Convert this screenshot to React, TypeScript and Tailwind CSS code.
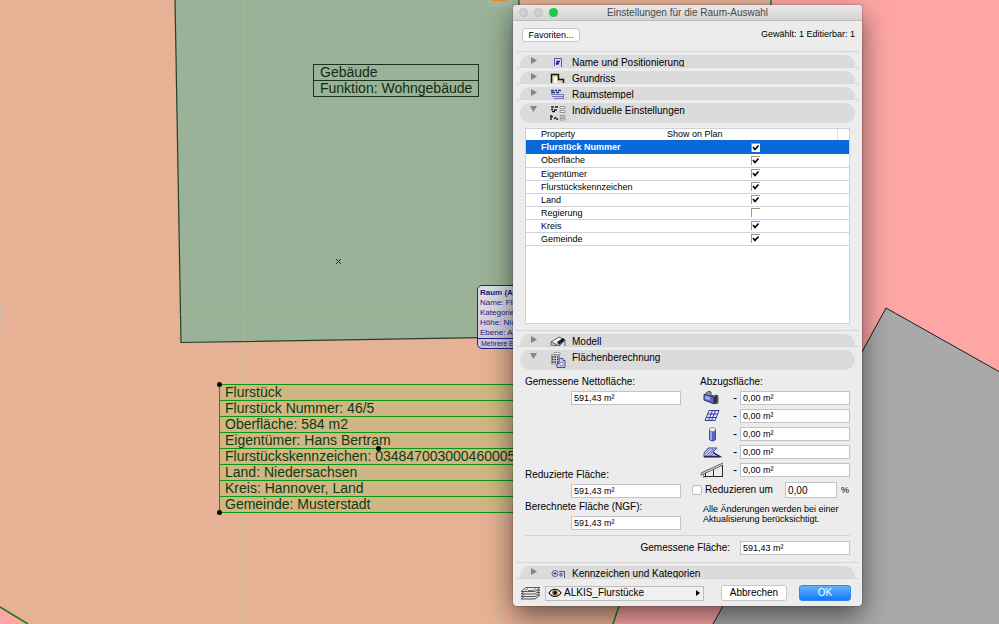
import type { ReactNode } from 'react'
import { clsx } from 'clsx'

const properties = [
  { name: 'Flurstück Nummer', shown: true, selected: true },
  { name: 'Oberfläche', shown: true },
  { name: 'Eigentümer', shown: true },
  { name: 'Flurstückskennzeichen', shown: true },
  { name: 'Land', shown: true },
  { name: 'Regierung', shown: false },
  { name: 'Kreis', shown: true },
  { name: 'Gemeinde', shown: true },
]

const parcelLines = [
  'Flurstück',
  'Flurstück Nummer: 46/5',
  'Oberfläche: 584 m2',
  'Eigentümer: Hans Bertram',
  'Flurstückskennzeichen: 034847003000460005',
  'Land: Niedersachsen',
  'Kreis: Hannover, Land',
  'Gemeinde: Musterstadt',
]

/* ---------- icons ---------- */

function PositionIcon() {
  return (
    <svg width="10" height="10" viewBox="0 0 10 10">
      <path d="M1.5 9V1.5h7V10" fill="#d5d8ee" stroke="#5a5eaa" />
      <path d="M4 8V4.5h3M3 6.5h3" fill="none" stroke="#1b1f86" strokeWidth="1.3" />
    </svg>
  )
}

function FloorPlanIcon() {
  return (
    <svg width="16" height="11" viewBox="0 0 16 11">
      <path d="M3 10V3h4v5h5v2" fill="none" stroke="#e2da7c" strokeWidth="1.4" />
      <path d="M4 10V4h3v6z" fill="#fff" />
      <path d="M1.500 10V1.500h7v5h5V10" fill="none" stroke="#16160c" strokeWidth="1.5" />
    </svg>
  )
}

function StampIcon() {
  return (
    <svg width="15" height="10" viewBox="0 0 15 10">
      <path d="M1 1.500h3M5 1.500h2M8 1.500h3M1 3.500h4M6 3.500h3" stroke="#2b3276" strokeWidth="1.4" />
      <path d="M1 5.500h13M2 7.500h12M4 9.500h10M13.500 5v5" stroke="#6d77b8" />
    </svg>
  )
}

function PropertiesIcon() {
  return (
    <svg width="16" height="16" viewBox="0 0 16 16">
      <path d="M1 2h3M5 2h3M1 4.500h2M4 5h3M2 6.500h3" stroke="#1a1a22" strokeWidth="1.7" />
      <path d="M1 10v5M1 11.500h2M4 14l2-2M6 14h2" stroke="#1a1a22" strokeWidth="1.4" />
      <path d="M10 1.500h5v2h-5zM10 5.500h5v2h-5zM10 10.500h5v1.500h-5zM10 13.500h5v1.500h-5z" fill="#f4f4f4" stroke="#83838b" strokeWidth=".8" />
    </svg>
  )
}

function ModelIcon() {
  return (
    <svg width="16" height="11" viewBox="0 0 16 11">
      <path d="M1 6l8-5 6 3-6 6z" fill="#f7f7f7" stroke="#33333d" strokeWidth=".8" />
      <path d="M7 6l6-4 2 2-6 5z" fill="#1c1c20" />
      <path d="M1 6v3l7 1M15 4v6" fill="none" stroke="#585c94" />
      <path d="M3 6.500l5 2" stroke="#9498c8" />
    </svg>
  )
}

function AreaIcon() {
  return (
    <svg width="16" height="16" viewBox="0 0 16 16">
      <path d="M4 .5h6v2H4z" fill="#fff" stroke="#8a8a92" strokeWidth=".8" />
      <path d="M1.500 3h8v9h-8z" fill="#dcdce2" stroke="#77777f" strokeWidth=".7" />
      <path d="M2 5h7M2 7.500h7M2 10h7" stroke="#26262c" strokeWidth="1.300" strokeDasharray="1.500 1" />
      <path d="M7 15.500v-4h2v-5h4v2h2v7z" fill="#c9ccec" stroke="#454b98" />
      <path d="M10 10.500h3v3h-3z" fill="#fff" stroke="#6e73b0" strokeWidth=".8" />
    </svg>
  )
}

function CategoryIcon() {
  return (
    <svg width="14" height="10" viewBox="0 0 14 10">
      <circle cx="4" cy="5.500" r="3" fill="#eceefc" stroke="#4d528f" />
      <path d="M2.500 5.500h3M4 4v3" stroke="#22265f" />
      <path d="M8 3.500h5.500V10M9 8V5.500h2V8z" fill="none" stroke="#4d528f" />
    </svg>
  )
}

function WallIcon() {
  return (
    <svg width="22" height="14" viewBox="0 0 22 14">
      <path d="M4 3l4-3 2 1v3l3 1 3-1 1 1v7l-2 1z" fill="#8f8f98" stroke="#2d2d38" strokeWidth=".8" />
      <path d="M3 3.500l10 2.500v7L3 9z" fill="#6166c4" stroke="#22265f" strokeWidth=".9" />
      <path d="M4 4.500l5 1.500v3L4 8z" fill="#a5a9ee" />
      <path d="M13 6l3-2v7l-3 2z" fill="#2c2c3e" />
    </svg>
  )
}

function GridIcon() {
  return (
    <svg width="22" height="14" viewBox="0 0 22 14">
      <path d="M8 1.500h10l-4 10H4z" fill="#e6e7fa" stroke="#373c92" />
      <path d="M11.500 1.500l-4 10M14.500 1.500l-4 10M6.500 5h10M5.500 8.500h10" stroke="#373c92" />
    </svg>
  )
}

function ColumnIcon() {
  return (
    <svg width="22" height="15" viewBox="0 0 22 15">
      <path d="M8.500 2v10c0 2.500 6 2.500 6 0V2z" fill="#5b60bd" stroke="#30346f" strokeWidth=".8" />
      <path d="M10 4v9" stroke="#b9bcf2" strokeWidth="1.500" />
      <ellipse cx="11.500" cy="2.500" rx="3" ry="2" fill="#fafafa" stroke="#777" strokeWidth=".8" />
    </svg>
  )
}

function SlabIcon() {
  return (
    <svg width="22" height="13" viewBox="0 0 22 13">
      <path d="M3 7l4-5h9l-4 4 7 5H3z" fill="#c9cbe9" stroke="#373c92" strokeWidth=".9" />
      <path d="M4 8l5-5M5 10l7-7M8 10l5-7M10 10l3-3" stroke="#595e9f" strokeWidth=".8" />
      <path d="M3 10.500h16l-7-4" fill="none" stroke="#22265f" strokeWidth="1.400" />
    </svg>
  )
}

function RoofIcon() {
  return (
    <svg width="24" height="17" viewBox="0 0 24 17">
      <path d="M1 11L23 1M1 13L23 3" stroke="#4b4b4b" strokeWidth=".9" />
      <path d="M5.500 11v4.500M13.500 7.500v7M22.500 3v12M4 14.500h19" fill="none" stroke="#2b2b2b" />
      <path d="M1 11v3M3.500 11v5" stroke="#8b8b8b" />
    </svg>
  )
}

function LayersIcon() {
  return (
    <svg width="21" height="13" viewBox="0 0 21 13">
      <path d="M1 12l5-4h14l-5 4z" fill="#ddd" stroke="#333" strokeWidth=".8" />
      <path d="M1 9.500l5-4h14l-5 4z" fill="#e6e6e6" stroke="#333" strokeWidth=".8" />
      <path d="M1 7l5-4h14l-5 4z" fill="#e6e6e6" stroke="#333" strokeWidth=".8" />
      <path d="M1 4.500l5-4h14l-5 4z" fill="#f0f0f0" stroke="#333" strokeWidth=".8" />
      <path d="M5 3.500l3-2M8 3.500h5l3-2" fill="none" stroke="#777" />
    </svg>
  )
}

function EyeIcon() {
  return (
    <svg width="14" height="10" viewBox="0 0 14 10">
      <path d="M1 5c3-5 9-5 12 0-3 4.500-9 4.500-12 0z" fill="#fff" stroke="#111" strokeWidth="1.200" />
      <circle cx="7" cy="4.800" r="2.800" fill="#8a5a22" />
      <circle cx="7" cy="4.800" r="1.400" fill="#000" />
    </svg>
  )
}

/* ---------- dialog parts ---------- */

function Section({ title, icon, open, children }: { title: string; icon: ReactNode; open?: boolean; children?: ReactNode }) {
  return (
    <section className="mx-[3px] border-t border-[#d6d6d6] pt-[3px]">
      <h2 className={clsx('mx-1 overflow-hidden', open ? 'h-5' : 'h-3')}>
        <button
          type="button"
          aria-expanded={!!open}
          className="flex h-5 w-full items-start rounded-full bg-[#dbdbdb] pl-[10px] text-left text-[10px] leading-4"
        >
          <svg className="mt-[2px] shrink-0" width="8" height="8" viewBox="0 0 8 8" fill="#858585">
            {open ? <path d="M0 1h7L3.500 7z" /> : <path d="M1 0v7l6-3.500z" />}
          </svg>
          <span className="ml-2 flex w-[26px] shrink-0 justify-center pt-[2px] pr-[3px]">{icon}</span>
          {title}
        </button>
      </h2>
      {children}
    </section>
  )
}

const inputClass =
  'h-[14px] w-[110px] rounded-none border border-[#c3c3c3] bg-white px-[2px] text-[9px] leading-3 text-black outline-none'

function AreaField({ id, label, className }: { id: string; label: string; className?: string }) {
  return (
    <div className={clsx('flex flex-col gap-[3px]', className)}>
      <label htmlFor={id} className="text-[10px] leading-3 whitespace-nowrap">
        {label}
      </label>
      <input id={id} defaultValue="591,43 m²" className={clsx(inputClass, 'self-end')} />
    </div>
  )
}

function PropertyTable() {
  return (
    <div className="mx-2 mt-[5px] mb-[6px] h-[196px] border border-[#d0d0d0] bg-white">
      <table className="w-full table-fixed border-collapse text-[9px] leading-3">
        <thead className="leading-[11px]">
          <tr className="h-[11px]">
            <th className="w-[139px] p-0 pl-[15px] text-left font-normal">Property</th>
            <th className="p-0 pl-[2px] text-left font-normal">Show on Plan</th>
            <th className="w-3 border-l border-[#dedede] p-0" aria-label="Leer" />
          </tr>
        </thead>
        <tbody>
          {properties.map((p) => (
            <tr
              key={p.name}
              className={clsx(p.selected ? 'h-[14px] bg-[#0968da] font-bold text-white' : 'h-[13px] border-b border-[#d2d2d2]')}
            >
              <td className="p-0 pl-[15px]">{p.name}</td>
              <td className="p-0 pl-[86px]" colSpan={2}>
                <span className="grid h-[9px] w-[9px]">
                  <input
                    type="checkbox"
                    aria-label={p.name}
                    defaultChecked={p.shown}
                    className="peer [grid-area:1/1] m-0 h-[9px] w-[9px] appearance-none border-t border-l border-[#a09878] bg-white"
                  />
                  <svg className="pointer-events-none invisible [grid-area:1/1] peer-checked:visible" width="9" height="9" viewBox="0 0 9 9">
                    <path d="M2 4l2 2.500L7.500 2.500" fill="none" stroke="#000" strokeWidth="1.600" />
                  </svg>
                </span>
              </td>
            </tr>
          ))}
        </tbody>
      </table>
    </div>
  )
}

const deductions = [
  { name: 'Wand', icon: <WallIcon /> },
  { name: 'Raster', icon: <GridIcon /> },
  { name: 'Stütze', icon: <ColumnIcon /> },
  { name: 'Decke', icon: <SlabIcon /> },
  { name: 'Dach', icon: <RoofIcon /> },
]

function AreaCalculation() {
  return (
    <div className="mx-2 pb-[7px] text-[10px] leading-3">
      <div className="flex gap-[11px] border-b border-[#d2d2d2] pt-[6px] pb-[5px]">
        <div className="flex w-[156px] shrink-0 flex-col">
          <AreaField id="netto" label="Gemessene Nettofläche:" />
          <AreaField id="reduziert" label="Reduzierte Fläche:" className="mt-auto" />
          <AreaField id="ngf" label="Berechnete Fläche (NGF):" className="mt-[3px]" />
        </div>
        <fieldset className="min-w-0 flex-1">
          <legend className="h-[15px] pl-2">Abzugsfläche:</legend>
          <div className="flex flex-col gap-1">
            {deductions.map((d) => (
              <label key={d.name} className="flex h-[14px] items-center justify-end">
                <span className="flex w-6 justify-center">{d.icon}</span>
                <span className="w-4 pr-[3px] text-right text-xs leading-3">-</span>
                <input aria-label={d.name} defaultValue="0,00 m²" className={inputClass} />
              </label>
            ))}
          </div>
          <div className="mt-[5px] flex items-center">
            <input
              id="reduce"
              type="checkbox"
              className="m-0 h-[10px] w-[10px] appearance-none rounded-[2px] border border-[#bdbdbd] bg-white"
            />
            <label htmlFor="reduce" className="ml-[3px] w-20 whitespace-nowrap">
              Reduzieren um
            </label>
            <input
              aria-label="Reduzieren in Prozent"
              defaultValue="0,00"
              className="h-4 w-[52px] border border-[#c3c3c3] bg-white px-[2px] text-[10px] text-black outline-none"
            />
            <span className="ml-1 text-[9px]">%</span>
          </div>
          <p className="mt-[6px] mb-[6px] pl-[11px] text-[9px] leading-[10px] whitespace-nowrap">
            Alle Änderungen werden bei einer
            <br />
            Aktualisierung berücksichtigt.
          </p>
        </fieldset>
      </div>
      <div className="mt-[5px] flex items-center justify-end gap-[10px]">
        <label htmlFor="gemessen">Gemessene Fläche:</label>
        <input id="gemessen" defaultValue="591,43 m²" className={inputClass} />
      </div>
    </div>
  )
}

function SettingsDialog() {
  return (
    <div
      role="dialog"
      aria-labelledby="dialog-title"
      className="absolute top-[5px] left-[513px] w-[349px] rounded-[4px] bg-[#ececec] text-black shadow-[0_10px_28px_rgba(0,0,0,0.55),0_0_2px_rgba(0,0,0,0.4)]"
    >
      <header className="flex h-4 items-center rounded-t-[4px] border-b border-[#bcbcbc] bg-gradient-to-b from-[#e9e9e9] to-[#d3d3d3] px-[6px]">
        <div className="flex w-10 gap-[6px]">
          <button type="button" aria-label="Schließen" className="h-[9px] w-[9px] rounded-full border border-[#bebebe] bg-[#d0d0d0]" />
          <button type="button" aria-label="Minimieren" className="h-[9px] w-[9px] rounded-full border border-[#bebebe] bg-[#d0d0d0]" />
          <button type="button" aria-label="Zoomen" className="h-[9px] w-[9px] rounded-full bg-[#1fca45]" />
        </div>
        <h1 id="dialog-title" className="flex-1 pr-10 text-center text-[10px] leading-3 text-[#4a4a4a]">
          Einstellungen für die Raum-Auswahl
        </h1>
      </header>

      <div className="flex h-[30px] items-start justify-between px-[7px] pt-[7px] pl-[9px] text-[9px] leading-3">
        <button type="button" className="h-[14px] w-[58px] rounded-[3px] border border-[#c6c6c6] bg-white">
          Favoriten...
        </button>
        <p>Gewählt: 1 Editierbar: 1</p>
      </div>

      <Section title="Name und Positionierung" icon={<PositionIcon />} />
      <Section title="Grundriss" icon={<FloorPlanIcon />} />
      <Section title="Raumstempel" icon={<StampIcon />} />
      <Section title="Individuelle Einstellungen" icon={<PropertiesIcon />} open>
        <div className="-mx-[3px] px-1">
          <PropertyTable />
        </div>
      </Section>
      <Section title="Modell" icon={<ModelIcon />} />
      <Section title="Flächenberechnung" icon={<AreaIcon />} open>
        <div className="-mx-[3px] px-1">
          <AreaCalculation />
        </div>
      </Section>
      <Section title="Kennzeichen und Kategorien" icon={<CategoryIcon />} />

      <footer className="mx-[3px] flex items-center border-t border-[#d6d6d6] pt-[6px] pr-2 pb-[5px] pl-1 text-[10px] leading-3">
        <LayersIcon />
        <div className="ml-1 flex h-[15px] w-[159px] items-center border border-[#bdbdbd] bg-[#f0f0f0] px-[2px]">
          <EyeIcon />
          <select aria-label="Ebene" className="ml-[2px] h-[13px] flex-1 appearance-none bg-transparent text-[10px] leading-3 outline-none">
            <option>ALKIS_Flurstücke</option>
          </select>
          <svg width="5" height="6" viewBox="0 0 5 6">
            <path d="M0 0l4 3-4 3z" />
          </svg>
        </div>
        <button type="button" className="ml-auto h-4 w-[66px] rounded-[3px] border border-[#c6c6c6] bg-white">
          Abbrechen
        </button>
        <button
          type="button"
          className="ml-3 h-4 w-[52px] rounded-[3px] border border-[#2f86ef] bg-gradient-to-b from-[#62b0fb] to-[#0f77fb] text-white"
        >
          OK
        </button>
      </footer>
    </div>
  )
}

/* ---------- floor plan behind the dialog ---------- */

function PlanDrawing() {
  return (
    <svg className="absolute inset-0 h-full w-full" aria-hidden="true">
      <path d="M771 0L771 140 619 606 400 1270H3000V0z" fill="#fea6a6" />
      <path d="M771 0V140L619 606 400 1270" fill="none" stroke="#128212" strokeWidth="1.500" />
      <path d="M0 607l28 17L1100 1274H0z" fill="#fea6a6" />
      <path d="M0 607l28 17" stroke="#128212" strokeWidth="1.500" />
      <path d="M886 308L1999 934V1400H285L713 624z" fill="#a9a9a9" stroke="#1c1c1c" />
      <path d="M175 -1l6 343.500L519 337V-1z" fill="#9ab298" stroke="#24402a" strokeWidth="1.200" />
      <path d="M244.500 0V3000M498.500 0V3000M752.500 0V3000M175 314.500h340" stroke="#9ccf7c" strokeOpacity=".35" />
      <path d="M336 259l5 5M341 259l-5 5" stroke="#17301a" />
      <rect x="-4" y="304" width="8" height="23" rx="2" fill="#d9b5a4" />
      <rect x="488" y="-4" width="24" height="11" rx="2" fill="#a4b5a6" />
      <path d="M491 .5h17" stroke="#f08a1c" strokeDasharray="4 .5" strokeWidth="1.500" />
    </svg>
  )
}

export default function App() {
  return (
    <main className="relative min-h-screen overflow-hidden bg-[#e7b196] font-['Liberation_Sans',Arial,sans-serif]">
      <PlanDrawing />

      <div className="absolute top-16 left-[313px] w-[166px] border border-[#17331b] text-[14px] leading-[15px] text-[#102c14]">
        <p className="border-b border-[#17331b] pl-[6px]">Gebäude</p>
        <p className="pl-[6px] whitespace-nowrap">Funktion: Wohngebäude</p>
      </div>

      <div className="absolute top-96 left-[219px] w-[319px] border-t border-l border-[#0f9414] bg-[#cfb783] text-[14px] leading-[15px] text-[#0f3a0c]">
        {parcelLines.map((line) => (
          <p key={line} className="border-b border-[#0f9414] pl-[5px] whitespace-nowrap">
            {line}
          </p>
        ))}
        <span className="absolute -top-[3px] -left-[3px] h-[5px] w-[5px] rounded-full bg-black" />
        <span className="absolute -bottom-[2px] -left-[3px] h-[5px] w-[5px] rounded-full bg-black" />
        <span className="absolute top-[61px] left-[156px] h-[5px] w-[5px] rounded-full bg-black" />
      </div>

      <div
        role="tooltip"
        className="absolute top-[285px] left-[477px] w-[60px] rounded-[5px] border border-[#23238a] bg-gradient-to-b from-[#dbe2e8] to-[#d3c5d8] text-[8px] leading-[10px] whitespace-nowrap text-[#1c1c80]"
      >
        <div className="border-b border-[#23238a] pt-[2px] pl-[2px]">
          <p className="font-bold">Raum (A</p>
          <p>Name: Fl</p>
          <p>Kategorie</p>
          <p>Höhe: Nic</p>
          <p>Ebene: A</p>
        </div>
        <p className="pl-[3px] text-[7px] leading-[9px]">Mehrere El</p>
      </div>

      <SettingsDialog />
    </main>
  )
}
